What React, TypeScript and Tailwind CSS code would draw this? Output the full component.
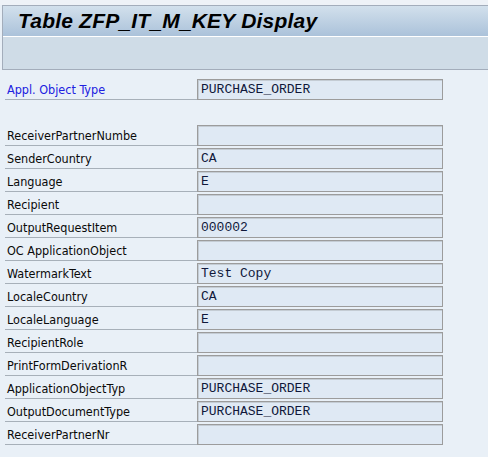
import { FC } from "react"

type Row = { label: string; value?: string }

const rows: Row[] = [
  { label: "ReceiverPartnerNumbe" },
  { label: "SenderCountry", value: "CA" },
  { label: "Language", value: "E" },
  { label: "Recipient" },
  { label: "OutputRequestItem", value: "000002" },
  { label: "OC ApplicationObject" },
  { label: "WatermarkText", value: "Test Copy" },
  { label: "LocaleCountry", value: "CA" },
  { label: "LocaleLanguage", value: "E" },
  { label: "RecipientRole" },
  { label: "PrintFormDerivationR" },
  { label: "ApplicationObjectTyp", value: "PURCHASE_ORDER" },
  { label: "OutputDocumentType", value: "PURCHASE_ORDER" },
  { label: "ReceiverPartnerNr" },
]

const Field: FC<{ value?: string }> = ({ value }) => (
  <div className="w-[246px] h-[21px] border border-[#9c9c9c] shadow-[inset_1px_1px_0_#c4ccd4] bg-[#dfe9f4] flex items-center px-[3px] font-['Liberation_Mono',monospace] text-[13px] text-[#10183a] whitespace-pre leading-none">
    {value}
  </div>
)

const FieldRow: FC<{ row: Row; blue?: boolean }> = ({ row, blue }) => (
  <div className="flex items-end h-[23px]">
    <div
      className={
        "w-[192px] h-[22px] flex items-center pl-[2px] pt-[4px] border-b border-[#a7b0b9] text-[12.5px] " +
        (blue ? "text-[#2020e0]" : "text-[#0a0a0a]")
      }>
      {row.label}
    </div>
    <Field value={row.value} />
  </div>
)

const App: FC = () => {
  return (
    <div className="w-[488px] h-[457px] bg-[#e9f0f7] overflow-hidden font-['DejaVu_Sans_Condensed','DejaVu_Sans',sans-serif]">
      <div className="h-[5px] bg-[#eef2f7]" />
      <div className="ml-[2px] border-l border-t border-b border-[#a3adbb]">
        <div className="h-[31px] bg-gradient-to-b from-[#d2e0ec] to-[#abc2da] border-b border-white flex items-center pl-[15px]">
          <span className="font-['Liberation_Sans',sans-serif] font-bold italic text-[21px] text-black tracking-[0.2px]">
            Table ZFP_IT_M_KEY Display
          </span>
        </div>
        <div className="h-[32px] bg-[#cfdce7]" />
      </div>
      <div className="pl-[5px] pt-[7px]">
        <FieldRow row={{ label: "Appl. Object Type", value: "PURCHASE_ORDER" }} blue />
        <div className="h-[23px]" />
        {rows.map((r) => (
          <FieldRow key={r.label} row={r} />
        ))}
      </div>
    </div>
  )
}

export default App
